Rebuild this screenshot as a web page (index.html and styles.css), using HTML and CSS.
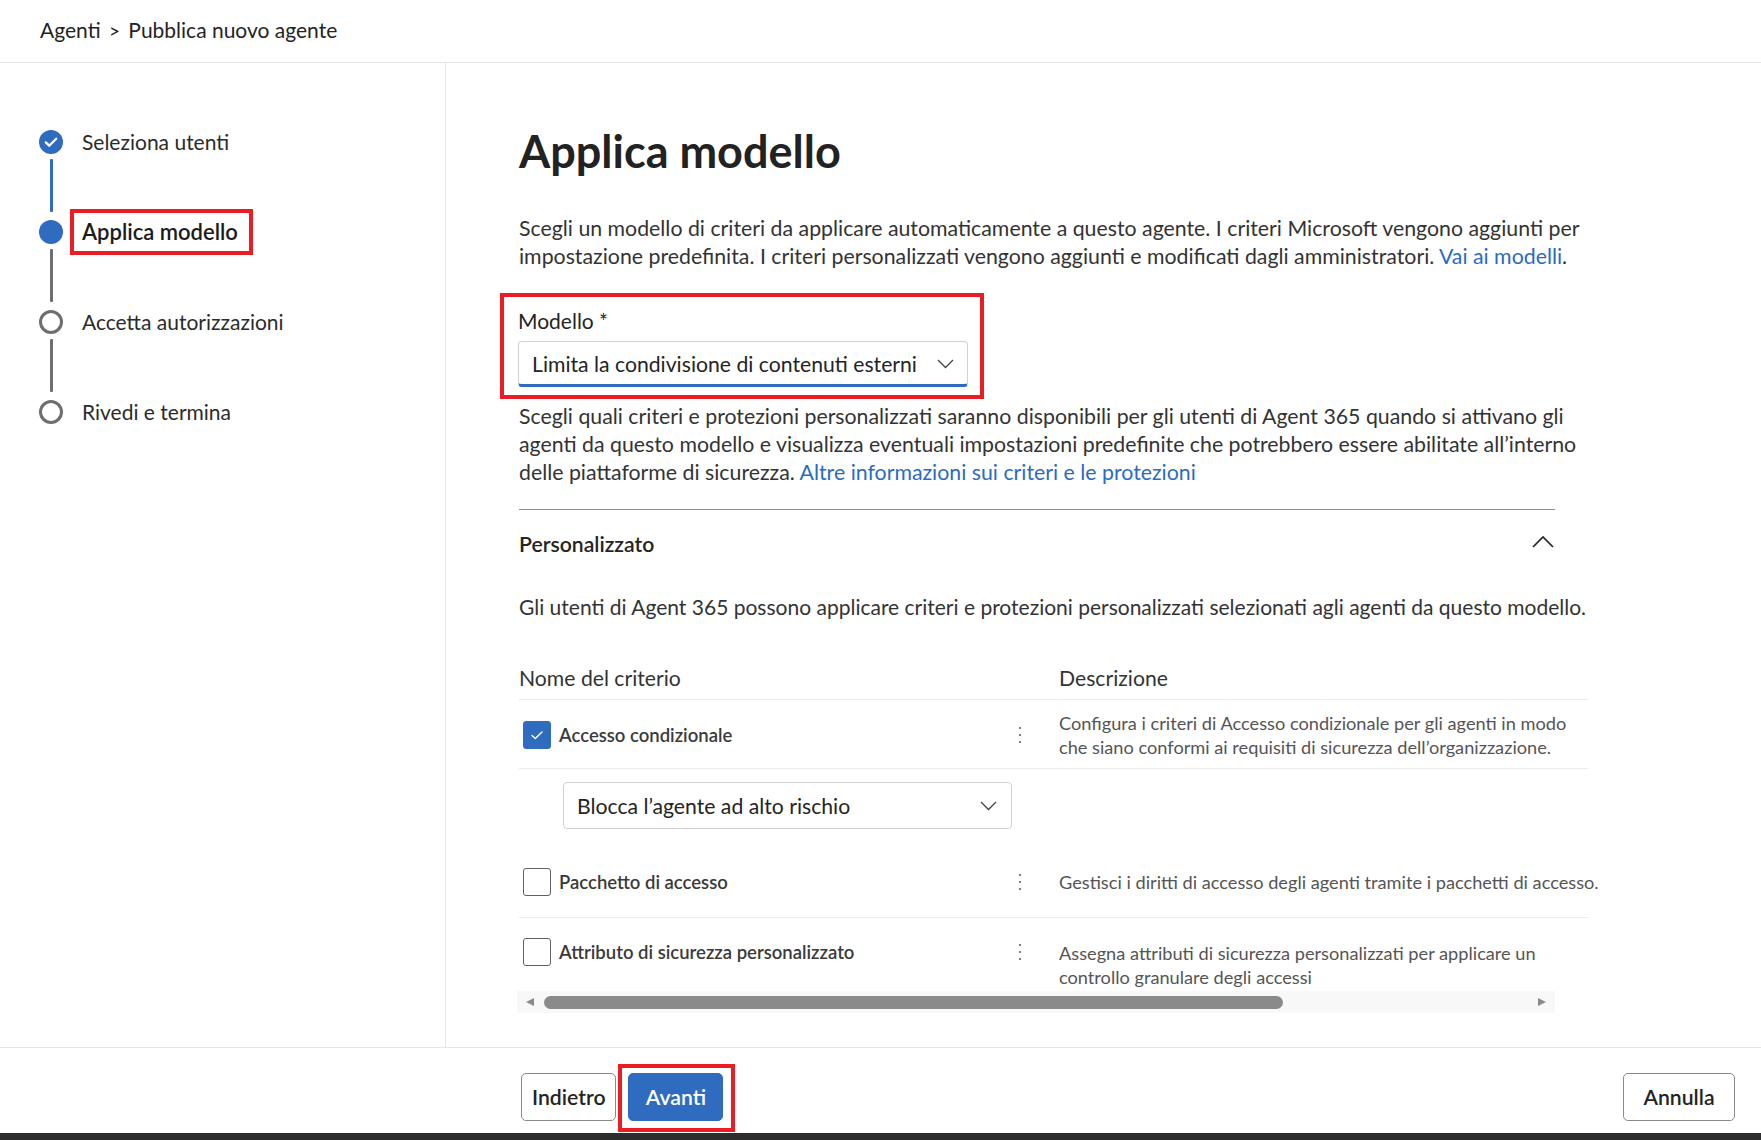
FILE: index.html
```html
<!DOCTYPE html>
<html lang="it">
<head>
<meta charset="utf-8">
<title>Pubblica nuovo agente</title>
<link rel="stylesheet" href="styles.css">
</head>
<body>
<header class="topbar">
  <nav class="breadcrumb">Agenti <span class="crumb-sep">&gt;</span> Pubblica nuovo agente</nav>
</header>
<div class="layout">
  <aside class="sidebar">
    <div class="step">
      <svg class="step-icon" viewBox="0 0 24 24" width="24" height="24"><circle cx="12" cy="12" r="12" fill="#2f6bbf"/><path d="M6.8 12.4l3.4 3.3 7-7" fill="none" stroke="#fff" stroke-width="2.3" stroke-linecap="round" stroke-linejoin="round"/></svg>
      <span class="step-label">Seleziona utenti</span>
    </div>
    <div class="connector connector-done"></div>
    <div class="step">
      <span class="dot dot-current"></span>
      <span class="step-label step-label-current">Applica modello</span>
    </div>
    <div class="connector"></div>
    <div class="step">
      <span class="dot dot-todo"></span>
      <span class="step-label">Accetta autorizzazioni</span>
    </div>
    <div class="connector"></div>
    <div class="step">
      <span class="dot dot-todo"></span>
      <span class="step-label">Rivedi e termina</span>
    </div>
  </aside>
  <main class="content">
    <h1 class="title">Applica modello</h1>
    <p class="lead">Scegli un modello di criteri da applicare automaticamente a questo agente. I criteri Microsoft vengono aggiunti per<br>impostazione predefinita. I criteri personalizzati vengono aggiunti e modificati dagli amministratori. <a class="link" href="#">Vai ai modelli</a>.</p>
    <div class="field-frame">
      <div class="field-label">Modello *</div>
      <div class="select select-primary">
        <span>Limita la condivisione di contenuti esterni</span>
        <svg class="chev" viewBox="0 0 17 10" width="17" height="10"><path d="M1 1l7.5 7.5L16 1" fill="none" stroke="#424242" stroke-width="1.3"/></svg>
      </div>
    </div>
    <p class="lead help">Scegli quali criteri e protezioni personalizzati saranno disponibili per gli utenti di Agent 365 quando si attivano gli<br>agenti da questo modello e visualizza eventuali impostazioni predefinite che potrebbero essere abilitate all’interno<br>delle piattaforme di sicurezza. <a class="link" href="#">Altre informazioni sui criteri e le protezioni</a></p>
    <section class="accordion">
      <div class="acc-head">
        <span class="acc-title">Personalizzato</span>
        <svg viewBox="0 0 22 13" width="22" height="13"><path d="M1 12L11 2l10 10" fill="none" stroke="#242424" stroke-width="1.7"/></svg>
      </div>
      <p class="acc-intro">Gli utenti di Agent 365 possono applicare criteri e protezioni personalizzati selezionati agli agenti da questo modello.</p>
      <div class="table">
        <div class="thead">
          <div class="col-name th">Nome del criterio</div>
          <div class="col-desc th">Descrizione</div>
        </div>
        <div class="tr">
          <div class="col-name cell-name">
            <span class="checkbox checkbox-on"><svg viewBox="0 0 16 16" width="16" height="16"><path d="M3 8.4l3.3 3.2L13 5" fill="none" stroke="#fff" stroke-width="1.4" stroke-linecap="round" stroke-linejoin="round"/></svg></span>
            <span class="policy">Accesso condizionale</span>
            <span class="kebab"><i></i><i></i><i></i></span>
          </div>
          <div class="col-desc desc">Configura i criteri di Accesso condizionale per gli agenti in modo<br>che siano conformi ai requisiti di sicurezza dell’organizzazione.</div>
        </div>
        <div class="subrow">
          <div class="select select-sm">
            <span>Blocca l’agente ad alto rischio</span>
            <svg class="chev" viewBox="0 0 17 10" width="17" height="10"><path d="M1 1l7.5 7.5L16 1" fill="none" stroke="#424242" stroke-width="1.3"/></svg>
          </div>
        </div>
        <div class="tr tr-single">
          <div class="col-name cell-name">
            <span class="checkbox"></span>
            <span class="policy">Pacchetto di accesso</span>
            <span class="kebab"><i></i><i></i><i></i></span>
          </div>
          <div class="col-desc desc nowrap">Gestisci i diritti di accesso degli agenti tramite i pacchetti di accesso.</div>
        </div>
        <div class="tr tr-top">
          <div class="col-name cell-name">
            <span class="checkbox"></span>
            <span class="policy">Attributo di sicurezza personalizzato</span>
            <span class="kebab"><i></i><i></i><i></i></span>
          </div>
          <div class="col-desc desc">Assegna attributi di sicurezza personalizzati per applicare un<br>controllo granulare degli accessi</div>
        </div>
      </div>
      <div class="hscroll">
        <span class="arrow arrow-left"></span>
        <span class="thumb"></span>
        <span class="arrow arrow-right"></span>
      </div>
    </section>
  </main>
</div>
<footer class="footer">
  <div class="footer-left">
    <button class="btn btn-secondary">Indietro</button>
    <span class="highlight-frame"><button class="btn btn-primary">Avanti</button></span>
  </div>
  <button class="btn btn-secondary btn-cancel">Annulla</button>
</footer>
<div class="taskbar"></div>
</body>
</html>
```
FILE: styles.css
```css
* { box-sizing: border-box; }
html, body { margin: 0; padding: 0; }
body {
  width: 1761px;
  height: 1140px;
  overflow: hidden;
  background: #ffffff;
  color: #242424;
  font-family: "Lato", "Open Sans", sans-serif;
  display: flex;
  flex-direction: column;
}

/* top bar */
.topbar {
  height: 63px;
  border-bottom: 1px solid #e6e6e6;
  display: flex;
  align-items: center;
  padding-left: 40px;
  padding-bottom: 3px;
}
.breadcrumb { font-size: 21px; color: #242424; }
.crumb-sep { margin: 0 3px; font-size: 19px; }

/* layout */
.layout {
  display: flex;
  height: 984px;
}
.sidebar {
  width: 446px;
  flex: none;
  border-right: 1px solid #e6e6e6;
  padding: 66px 0 0 39px;
  display: flex;
  flex-direction: column;
}
.step {
  height: 24px;
  display: flex;
  align-items: center;
  gap: 19px;
  margin-top: 1px;
}
.step-icon { flex: none; display: block; }
.dot {
  width: 24px;
  height: 24px;
  border-radius: 50%;
  flex: none;
}
.dot-current { background: #2f6bbf; }
.dot-todo { border: 3px solid #6e6e6e; background: #fff; }
.step-label { font-size: 21px; color: #2b2b2b; line-height: 24px; white-space: nowrap; }
.step-label-current {
  font-size: 22px;
  font-weight: 600;
  color: #1b1b1b;
  border: 4px solid #ec1c24;
  padding: 7px 11px 7px 8px;
  margin-left: -12px;
}
.connector {
  width: 3px;
  height: 53px;
  margin: 5px 0 7px 10.5px;
  background: #6e6e6e;
  border-radius: 1px;
}
.connector-done { background: #2f6bbf; }

/* content */
.content {
  flex: 1;
  padding: 63px 0 0 73px;
  overflow: hidden;
}
.title {
  margin: 0;
  font-size: 45px;
  line-height: 50px;
  font-weight: 700;
  color: #222;
}
.lead {
  margin: 38px 0 0;
  font-size: 21.3px;
  line-height: 28px;
  color: #333;
  white-space: nowrap;
}
.link { color: #2b6bc1; text-decoration: none; }
.field-frame {
  margin: 23px 0 0 -19px;
  width: 484px;
  border: 4px solid #ec1c24;
  padding: 10px 12px 8px 14px;
}
.field-label { font-size: 21px; line-height: 28px; color: #242424; }
.select {
  display: flex;
  align-items: center;
  justify-content: space-between;
  height: 46px;
  border: 1px solid #d1d1d1;
  border-radius: 4px;
  padding: 0 13px 0 13px;
  font-size: 21.2px;
  color: #242424;
  background: #fff;
}
.select-primary {
  margin-top: 6px;
  border-bottom: 3px solid #2f6bbf;
  padding-top: 2px;
}
.chev { flex: none; display: block; }
.help { margin-top: 3px; }

.accordion {
  margin-top: 23px;
  width: 1036px;
  border-top: 1px solid #8f8f8f;
}
.acc-head {
  height: 68px;
  display: flex;
  align-items: center;
  justify-content: space-between;
  padding-right: 1px;
}
.acc-title { font-size: 21.2px; font-weight: 600; color: #242424; }
.acc-head svg { display: block; margin-top: -6px; }
.acc-intro {
  margin: 15px 0 0;
  font-size: 21px;
  line-height: 28px;
  color: #333;
  white-space: nowrap;
}

/* table */
.table { margin-top: 38px; width: 1069px; }
.thead {
  display: flex;
  height: 41px;
  border-bottom: 1px solid #ebebeb;
  padding-bottom: 2px;
  align-items: center;
}
.th { font-size: 21.2px; color: #333; }
.col-name { width: 540px; flex: none; }
.col-desc { flex: 1; }
.tr {
  display: flex;
  align-items: center;
  height: 69px;
  border-bottom: 1px solid #ebebeb;
  padding-top: 2px;
}
.tr-single { height: 73px; }
.tr-top {
  align-items: flex-start;
  height: 73px;
  border-bottom: none;
  padding-top: 0;
}
.tr-top .cell-name { padding-top: 20px; }
.tr-top .desc { padding-top: 23px; }
.cell-name {
  display: flex;
  align-items: center;
  padding-left: 4px;
}
.checkbox {
  width: 28px;
  height: 28px;
  flex: none;
  border: 1.5px solid #616161;
  border-radius: 3px;
  display: flex;
  align-items: center;
  justify-content: center;
  background: #fff;
}
.checkbox-on { background: #2f6bbf; border-color: #2f6bbf; }
.checkbox svg { display: block; }
.policy {
  margin-left: 8px;
  font-size: 18.5px;
  font-weight: 600;
  color: #3a3a3a;
  white-space: nowrap;
}
.kebab {
  margin-left: auto;
  margin-right: 38px;
  display: flex;
  flex-direction: column;
  gap: 4.5px;
  align-items: center;
}
.kebab i {
  width: 2.5px;
  height: 2.5px;
  border-radius: 50%;
  background: #555;
  display: block;
}
.desc {
  font-size: 18.2px;
  line-height: 24px;
  color: #555;
}
.nowrap { white-space: nowrap; }
.subrow {
  height: 76px;
  padding: 13px 0 0 44px;
}
.select-sm { width: 449px; height: 47px; padding: 0 14px 0 13px; }

/* scrollbar */
.hscroll {
  margin-left: -2px;
  width: 1038px;
  height: 22px;
  background: #f8f8f8;
  display: flex;
  align-items: center;
  padding: 0 9px;
}
.arrow { width: 0; height: 0; border-top: 4.5px solid transparent; border-bottom: 4.5px solid transparent; flex: none; }
.arrow-left { border-right: 8px solid #8a8a8a; }
.arrow-right { border-left: 8px solid #8a8a8a; margin-left: auto; }
.thumb {
  width: 739px;
  height: 13px;
  border-radius: 7px;
  background: #8a8a8a;
  margin-left: 10px;
}

/* footer */
.footer {
  height: 86px;
  border-top: 1px solid #e6e6e6;
  display: flex;
  align-items: flex-start;
  justify-content: space-between;
  padding: 25px 26px 0 521px;
}
.footer-left { display: flex; align-items: flex-start; gap: 2px; }
.btn {
  height: 48px;
  min-width: 95px;
  border-radius: 5px;
  font-family: "Lato", "Open Sans", sans-serif;
  font-size: 21.2px;
  font-weight: 600;
  padding: 0 10px;
  cursor: pointer;
}
.btn-secondary { background: #fff; border: 1px solid #8a8a8a; color: #242424; }
.btn-primary { background: #2f6bbf; border: 1px solid #2f6bbf; color: #fff; }
.btn-cancel { width: 112px; }
.highlight-frame {
  display: block;
  margin-top: -9px;
  border: 4px solid #ec1c24;
  padding: 5px 8px 7px 6px;
}
.highlight-frame .btn { display: block; }
.taskbar { height: 7px; background: #2d2d2d; }
```
